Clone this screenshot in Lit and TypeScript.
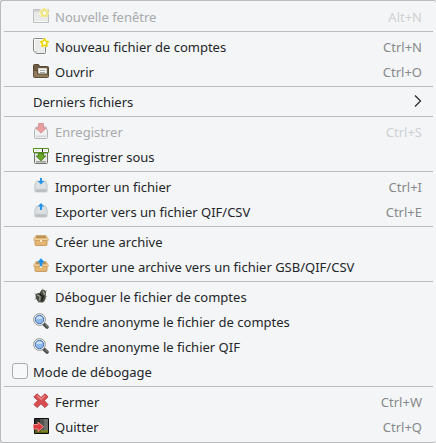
import { LitElement, html, svg, css, nothing } from "lit";
import { customElement, property, state } from "lit/decorators.js";

const tray = svg`
  <path d="M1.800 7L3.500 3h9.200L14.200 7v5.800q0 1.200-1.200 1.200H3q-1.200 0-1.200-1.200z" fill="#d6d9db" stroke="#c3c6c8" stroke-width=".8"/>
  <path d="M2.500 11.500h11v1.500q0 .7-.7.700H3.200q-.7 0-.7-.7z" fill="#b9bcbe"/>
  <path d="M4 3.500h8l1.200 6.500H2.800z" fill="#dde0e2"/>`;

const crate = svg`
  <path d="M2 7h12v4.500q0 1-1 1H3q-1 0-1-1z" fill="#e3b671" stroke="#c0904f" stroke-width=".8"/>
  <path d="M3 2.500h10l2.400 4q.2 1-.8 1H1.400q-1 0-.8-1z" fill="#f0cf98" stroke="#cd9f60" stroke-width=".8"/>
  <path d="M3.800 3.200h8.400l1 2H2.800z" fill="#a87a42"/>
  <path d="M4.500 4.200h7" stroke="#c99c5f"/>
  <path d="M7 7h2v2H7z" fill="#f8e8ca"/>`;

const lens = svg`
  <path d="M11 11.200l3 2.800" stroke="#4e4f4e" stroke-width="3.600" stroke-linecap="round"/>
  <path d="M12.500 11.800l2 1.700" stroke="#9a9b9a" stroke-width="1"/>
  <circle cx="6.500" cy="6.500" r="5.900" fill="#fafbfb" stroke="#8d908e" stroke-width="1"/>
  <circle cx="6.500" cy="6.500" r="4.200" fill="#8db6ea" stroke="#4270ae" stroke-width="1"/>
  <path d="M3.300 6.300q.4-2.800 3.200-3 2.700 0 3.100 2.500-3.400-.3-6.300.5z" fill="#cfe2f9"/>`;

const star = svg`<path d="M11.500 .9l1.300 2.300 2.500.5-1.700 1.900.3 2.600-2.400-1-2.400 1 .3-2.600-1.700-1.900 2.500-.5z"
  fill="#fffde4" stroke="#e8d500" stroke-width="1.500" stroke-linejoin="round"/>`;

const icons = {
  window: svg`<path d="M.5 1.500h15v13H.5z" fill="#dededb" stroke="#8b8b88"/><path d="M1 2h14v2H1z" fill="#b2b4b2"/>
    <path d="M1.500 13.500h13" stroke="#fff"/><circle cx="11" cy="4.800" r="5" fill="#fff48c" opacity=".8"/>${star}`,
  page: svg`<path d="M.5 1.500q0-1 1-1h10q1 0 1 1v13q0 1-1 1H3.500l-3-2.500z" fill="#ebebea" stroke="#858783"/>
    <path d="M1.500 12.500v-11h9.500" fill="none" stroke="#fff"/><path d="M1 13h2.500v2.500z" fill="#b8bab6"/>
    <circle cx="11.500" cy="4.800" r="4.500" fill="#fffbd8"/>${star}`,
  folder: svg`<path d="M.5 13V2.500q0-1 1-1h4l1.500 2h7.500q1 0 1 1V13z" fill="#6e5b43" stroke="#57482f"/>
    <path d="M5.500 5.500h8v6h-8z" fill="#f5f5f3" stroke="#d4d2ce"/><path d="M7 7.500h5M7 9.500h5" stroke="#a5a5a3"/>
    <path d="M.5 7.500H4l1 3.500h10.500v2.500q0 1-1 1h-13q-1 0-1-1z" fill="#8f7a5c" stroke="#625038"/>`,
  save: svg`<path d="M1.500 8L3 4h10L14.500 8v6.500q0 1-1 1h-11q-1 0-1-1z" fill="#ececea" stroke="#777975"/>
    <path d="M3 12.500h10v1.500H3z" fill="#babdb9"/>
    <path d="M5.500 .5h5v4.500h2.700L8 10 2.800 5h2.700z" fill="#e0494e" stroke="#bd3940"/>`,
  saveAs: svg`<path d="M1.500 5h13v9.500q0 1-1 1h-11q-1 0-1-1z" fill="#e9eae7" stroke="#70736d"/>
    <path d="M3 13h10v1.500H3z" fill="#a0a39d"/>
    <path d="M5.500 5.500h5v2.500h2.300L8 12.700 3.200 8h2.300z" fill="#6ba629" stroke="#47801a"/>
    <path d="M.5 .5h15v4H.5z" fill="#fff" stroke="#538e1c"/><path d="M2 2.500h6M11 2.500h3" stroke="#e1e4de"/><path d="M9.500 1v3" stroke="#222"/>`,
  importFile: svg`${tray}<path d="M7 0h2v3h2.400L8 6.500 4.600 3H7z" fill="#2596e8"/>`,
  exportFile: svg`${tray}<path d="M7 7h2V3.500h2.400L8 0 4.600 3.500H7z" fill="#2596e8"/>`,
  crate,
  crateOut: svg`<g transform="translate(0 1)">${crate}</g>
    <path d="M7 8h2V4.300h2.400L8 .5 4.600 4.300H7z" fill="#168bea" stroke="#3ba4f2" stroke-width=".6"/>`,
  bug: svg`<path d="M1.500 5.500L4 7M1.500 11.500l2-1M5 15l1-2M9.500 2l.5-1.500M12 3.500l2-1M12.500 8l1.500 1" stroke="#a3a59d"/>
    <path d="M2.500 6.500q1.500-2 4-1.500L8.500 2q3-.8 4.500 1.500l-.3 3.500q.8 4.500-2.700 7.500-3.500.5-5.500-1.500-2.500-3-2-6.500z" fill="#4a4c43"/>
    <path d="M4 7.500q2.200-.5 3 1.200l-.3 4M9.500 3.500q2.200.5 1.800 3.500" fill="none" stroke="#979a8e" stroke-width="1.400"/>
    <path d="M8.500 13l1.800-5.500M7 6l2 2" stroke="#191a14" stroke-width="1.300"/>`,
  lens,
  cross: svg`<path d="M4 .8L8 4.600 12 .8l3 3L11.200 7.600 15 11.500l-3 3L8 10.700l-4 3.800-3-3 3.800-3.900L1 3.800z"
    fill="#d94e50" stroke="#b5373b" stroke-linejoin="round"/><path d="M4 2.600l4 3.700 4-3.700" fill="none" stroke="#ee9292" stroke-width="1.200"/>`,
  quit: svg`<path d="M1.500 .5h14v15h-14z" fill="#2c2e2b" stroke="#0c0c0c"/>
    <path d="M7 1h8v11H7z" fill="#50524f"/><path d="M11 1h4v11h-4z" fill="#6d706b"/>
    <path d="M2 12h13v3H2z" fill="#5c6516"/><path d="M8 12h7v2H8z" fill="#78822a"/>
    <path d="M.5 6.500h4.500V4L10.500 8.800 5 13.500V11H.5z" fill="#dc3b40" stroke="#f08f8f"/>`,
};

type Entry = {
  label: string;
  icon?: keyof typeof icons;
  keys?: string;
  disabled?: boolean;
  submenu?: boolean;
  toggle?: boolean;
};

const groups: Entry[][] = [
  [{ label: "Nouvelle fenêtre", icon: "window", keys: "Alt+N", disabled: true }],
  [
    { label: "Nouveau fichier de comptes", icon: "page", keys: "Ctrl+N" },
    { label: "Ouvrir", icon: "folder", keys: "Ctrl+O" },
  ],
  [{ label: "Derniers fichiers", submenu: true }],
  [
    { label: "Enregistrer", icon: "save", keys: "Ctrl+S", disabled: true },
    { label: "Enregistrer sous", icon: "saveAs" },
  ],
  [
    { label: "Importer un fichier", icon: "importFile", keys: "Ctrl+I" },
    { label: "Exporter vers un fichier QIF/CSV", icon: "exportFile", keys: "Ctrl+E" },
  ],
  [
    { label: "Créer une archive", icon: "crate" },
    { label: "Exporter une archive vers un fichier GSB/QIF/CSV", icon: "crateOut" },
  ],
  [
    { label: "Déboguer le fichier de comptes", icon: "bug" },
    { label: "Rendre anonyme le fichier de comptes", icon: "lens" },
    { label: "Rendre anonyme le fichier QIF", icon: "lens" },
    { label: "Mode de débogage", toggle: true },
  ],
  [
    { label: "Fermer", icon: "cross", keys: "Ctrl+W" },
    { label: "Quitter", icon: "quit", keys: "Ctrl+Q" },
  ],
];

@customElement("menu-entry")
export class MenuEntry extends LitElement {
  @property({ attribute: false }) entry!: Entry;
  @state() private checked = false;

  static styles = css`
    :host { display: block; }
    .row {
      box-sizing: border-box;
      display: flex;
      align-items: center;
      width: 100%;
      height: 25px;
      margin: 0;
      padding: 0 14px 0 32px;
      border: 0;
      background: none;
      color: #232629;
      font: 13px/18px "Noto Sans", sans-serif;
      text-align: left;
      white-space: nowrap;
    }
    .row:not(:disabled):hover { background: #d9ebf6; }
    .row:disabled { color: #a8aaab; }
    .icon { flex: none; width: 16px; height: 16px; margin: 0 6px 1px 0; }
    .row:disabled .icon { opacity: 0.5; }
    .label { flex: 1; }
    .keys { color: #87898b; }
    .row:disabled .keys { color: #cfd1d2; }
    .chevron { flex: none; width: 8px; height: 14px; margin-bottom: 1px; }
    .toggle { padding-left: 11px; }
    .box {
      appearance: none;
      box-sizing: border-box;
      flex: none;
      width: 16px;
      height: 16px;
      margin: 0 5px 1px 0;
      border: 1px solid #a9acae;
      border-radius: 3px;
      background: #f7f8f9;
    }
    .box:checked { background: #3daee9; }
  `;

  private flip(e: Event) {
    this.checked = (e.target as HTMLInputElement).checked;
  }

  render() {
    const { label, icon, keys, disabled, submenu, toggle } = this.entry;
    if (toggle) {
      return html`<label class="row toggle">
        <input class="box" type="checkbox" .checked=${this.checked} @change=${this.flip} />
        <span class="label">${label}</span>
      </label>`;
    }
    return html`<button class="row" type="button" ?disabled=${disabled} aria-haspopup=${submenu ? "menu" : nothing}>
      ${icon ? html`<svg class="icon" viewBox="0 0 16 16" fill="none" aria-hidden="true">${icons[icon]}</svg>` : nothing}
      <span class="label">${label}</span>
      ${keys ? html`<span class="keys">${keys}</span>` : nothing}
      ${submenu
        ? html`<svg class="chevron" viewBox="0 0 8 14" fill="none" aria-hidden="true">
            <path d="M1 1.500L6.500 7 1 12.500" stroke="#232629" stroke-width="1.200" />
          </svg>`
        : nothing}
    </button>`;
  }
}

@customElement("app-root")
export class AppRoot extends LitElement {
  static styles = css`
    :host { display: block; background: #e6e7e8; }
    .menu {
      padding: 3px 0;
      border: 1px solid #b9bbbd;
      border-right: 0;
      border-radius: 3px;
      background: #f3f5f7;
    }
    .rule {
      height: 1px;
      margin: 2px 3px;
      border: 0;
      background: #babcbe;
    }
  `;

  render() {
    return html`<nav class="menu" aria-label="Fichier">
      ${groups.map(
        (group, i) => html`${i ? html`<hr class="rule" />` : nothing}
          ${group.map((entry) => html`<menu-entry .entry=${entry}></menu-entry>`)}`
      )}
    </nav>`;
  }
}
